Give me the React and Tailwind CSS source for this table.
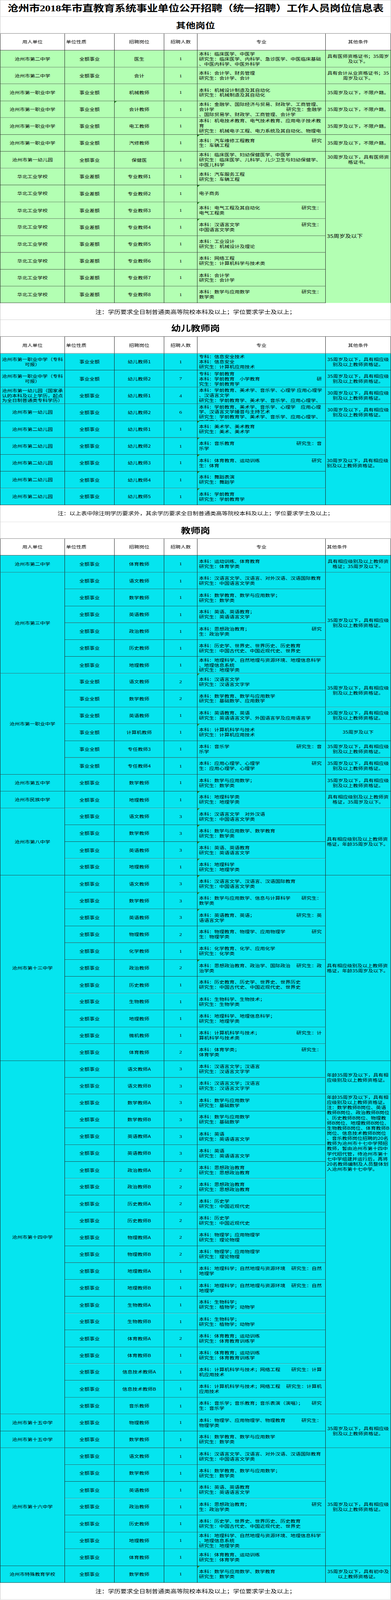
import React from 'react';

const GREEN = 'bg-[#b3ffb3]';
const CYAN = 'bg-[#05e5ef]';
const QE = '全额事业';
const SQ = '事业全额';

const A35 = ['35周岁及以下，具有相应级', '别及以上教师资格证。'];
const A30 = ['30周岁及以下，具有相应级', '别及以上教师资格证。'];
const Y35 = ['具有相应级别及以上教师资', '格证，年龄35周岁及以下。'];
const BUXIAN = ['35周岁及以下，不限户籍。'];
const LONG = [
  '年龄35周岁及以下，具有相',
  '应级别及以上教师资格证。',
  '注：数学教师B岗位、英语',
  '教师B岗位、政治教师B岗位',
  '、历史教师B岗位、物理教',
  '师B岗位、地理教师B岗位、',
  '生物教师B岗位、体育教师B',
  '岗位、信息技术教师B岗位',
  '、音乐教师岗位招聘的20名',
  '教师为沧州市十七中学预招',
  '教师，暂由沧州市第十四中',
  '学代招代管，待沧州市第十',
  '七中学组建并运行后，再将',
  '20名教师编制及人员整体划',
  '入沧州市第十七中学。',
];

const other = [
  { u: '沧州市第二中学', n: QE, p: '医生', c: '1', m: ['本科：临床医学、中医学', '研究生：临床医学、内科学、急诊医学、中医临床基础', '、中医内科学、中医外科学'], o: ['具有医师资格证书；35周岁', '及以下。'] },
  { u: '沧州市第二中学', n: QE, p: '会计', c: '1', m: ['本科：会计学、财务管理', '研究生：会计学、会计'], o: ['具有会计从业资格证书；35', '周岁及以下。'] },
  { u: '沧州市第一职业中学', n: SQ, p: '机械教师', c: '1', m: ['本科：机械设计制造及其自动化', '研究生：机械制造及其自动化'], o: BUXIAN },
  { u: '沧州市第一职业中学', n: SQ, p: '会计教师', c: '1', pk: true, m: ['本科：金融学、国际经济与贸易、财政学、工商管理、', ['会计学', '研究生：金融学'], '、国际贸易学、财政学、工商管理、会计学'], o: BUXIAN },
  { u: '沧州市第一职业中学', n: SQ, p: '电工教师', c: '1', m: ['本科：机电技术教育、电气技术教育、应用电子技术教', '育', '研究生：机械电子工程、电力系统及其自动化、物理电', '子学'], o: BUXIAN },
  { u: '沧州市第一职业中学', n: SQ, p: '汽修教师', c: '1', mk: true, m: [['本科：汽车维修工程教育', '研究'], '生：车辆工程'], o: BUXIAN },
  { u: '沧州市第一幼儿园', n: QE, p: '保健医', c: '1', m: ['本科：临床医学、妇幼保健医学、中医学', '研究生：临床医学、儿科学、儿少卫生与妇幼保健学、', '中医儿科学'], o: ['30周岁及以下，具有医师资', '格证书。'] },
  { u: '华北工业学校', n: '事业差额', p: '专业教师1', c: '1', m: ['本科：汽车服务工程', '研究生：车辆工程'], o: ['35周岁及以下'], os: 8, oa: 'l', big: true, nb: true },
  { u: '华北工业学校', n: '事业差额', p: '专业教师2', c: '1', mk: true, m: ['电子商务'], o: null },
  { u: '华北工业学校', n: '事业差额', p: '专业教师3', c: '1', mk: true, m: [['本科：电气工程及其自动化', '研究生：'], '电气工程类'], o: null },
  { u: '华北工业学校', n: '事业差额', p: '专业教师4', c: '1', mk: true, m: [['本科：汉语言文学', '研究生：'], '中国语言文学类'], o: null },
  { u: '华北工业学校', n: '事业差额', p: '专业教师5', c: '1', m: ['本科：工业设计', '研究生：机械设计及理论'], o: null },
  { u: '华北工业学校', n: '事业差额', p: '专业教师6', c: '1', m: ['本科：网络工程', '研究生：计算机科学与技术类'], o: null },
  { u: '华北工业学校', n: '事业差额', p: '专业教师7', c: '1', m: ['本科：会计学', '研究生：会计学'], o: null },
  { u: '华北工业学校', n: '事业差额', p: '专业教师8', c: '1', m: [['本科：数学与应用数学', '研究生：'], '数学类'], o: null },
];

const kids = [
  { u: ['沧州市第一职业中学（专科', '可报）'], n: SQ, p: '幼儿教师1', c: '1', m: ['专科：信息安全技术', '本科：信息安全', '研究生：计算机应用技术'], o: A35 },
  { u: ['沧州市第一职业中学（专科', '可报）'], n: SQ, p: '幼儿教师2', c: '7', m: ['专科：学前教育', ['本科：学前教育　小学教育', '研'], '究生：学前教育学'], o: A35 },
  { u: ['沧州市第一幼儿园（国家承', '认的本科及以上学历，起点', '为全日制普通类专科学历）'], n: QE, p: '幼儿教师1', c: '4', m: ['本科：学前教育、美术学、音乐学、心理学 应用心理学', '、汉语言文学', '研究生：学前教育学、美术学、音乐学、应用心理学、', '汉语言文学'], o: A30 },
  { u: '沧州市第一幼儿园', n: QE, p: '幼儿教师2', c: '6', m: ['本科：学前教育、美术学、音乐学、心理学　应用心理', '学、汉语言文学播音与主持艺术', '研究生：学前教育学、美术学、音乐学、应用心理学、', '汉语言文学'], o: A30 },
  { u: '沧州市第二幼儿园', n: QE, p: '幼儿教师1', c: '1', mk: true, m: ['本科：美术学、美术教育', '研究生：美术、美术学'], o: A30, os: 5, oa: 'l' },
  { u: '沧州市第二幼儿园', n: QE, p: '幼儿教师2', c: '1', mk: true, m: [['本科：音乐教育', '研究生：音'], '乐学'], o: null },
  { u: '沧州市第二幼儿园', n: QE, p: '幼儿教师3', c: '1', mk: true, m: [['本科：体育教育、运动训练', '研究'], '生：体育'], o: null },
  { u: '沧州市第二幼儿园', n: QE, p: '幼儿教师4', c: '1', mk: true, m: ['本科：舞蹈表演', '研究生：舞蹈学'], o: null },
  { u: '沧州市第二幼儿园', n: QE, p: '幼儿教师5', c: '1', mk: true, m: ['本科：学前教育', '研究生：学前教育学'], o: null },
];

const teach = [
  { u: '沧州市第二中学', n: QE, p: '体育教师', c: '1', m: ['本科：运动训练、体育教育', '研究生：体育学类'], o: ['具有相应级别及以上教师资', '格证；35周岁及以下。'] },
  { u: '沧州市第三中学', us: 6, n: QE, p: '语文教师', c: '1', m: ['本科：汉语言文学、汉语言、对外汉语、汉语国际教育', '研究生：中国语言文学类'], o: A35, os: 6 },
  { u: null, n: QE, p: '数学教师', c: '1', m: ['本科：数学教育、数学与应用数学；', '研究生：数学类'], o: null },
  { u: null, n: QE, p: '英语教师', c: '1', m: ['本科：英语、英语教育；', '研究生：英语语言文学'], o: null },
  { u: null, n: QE, p: '政治教师', c: '1', m: [['本科：思想政治教育；', '研究'], '生：政治学类'], o: null },
  { u: null, n: QE, p: '历史教师', c: '1', m: ['本科：历史学、世界史、世界历史、历史教育', '研究生：中国古代史、中国近现代史、世界史'], o: null },
  { u: null, n: QE, p: '地理教师', c: '1', m: ['本科：地理科学、自然地理与资源环境、地理信息科学', '、地理信息系统', '研究生：地理学类'], o: null },
  { u: '沧州市第一职业中学', us: 6, n: SQ, p: '语文教师', c: '2', mk: true, m: ['本科：汉语言文学', '研究生：汉语言文字学'], o: A35, os: 2 },
  { u: null, n: SQ, p: '数学教师', c: '2', m: ['本科：数学教育、数学与应用数学', '研究生：基础数学、应用数学'], o: null },
  { u: null, n: SQ, p: '英语教师', c: '1', m: ['本科：英语教育、英语', '研究生：英语语言文学、外国语言学及应用语言学'], o: A35 },
  { u: null, n: SQ, p: '计算机教师', c: '1', mk: true, m: ['本科：计算机科学与技术', '研究生：计算机应用技术'], o: ['35周岁及以下'] },
  { u: null, n: SQ, p: '专任教师3', c: '1', m: [['本科：音乐学', '研究生：音'], '乐学'], o: A35 },
  { u: null, n: SQ, p: '专任教师4', c: '1', m: [['本科：应用心理学、心理学', '研究'], '生：应用心理学、心理学'], o: A35 },
  { u: '沧州市第五中学', n: QE, p: '数学教师', c: '1', m: ['本科：数学与应用数学；', '研究生：数学类'], o: A35 },
  { u: '沧州市民族中学', n: QE, p: '地理教师', c: '1', mk: true, m: ['本科：地理科学类', '研究生：地理学类'], o: ['具有相应级别及以上教师资', '格证，35周岁及以下。'] },
  { u: '沧州市第八中学', us: 4, n: QE, p: '语文教师', c: '3', mk: true, m: ['本科：汉语言文学　对外汉语', '研究生：中国语言文学类'], o: Y35, os: 4, oa: 'l' },
  { u: null, n: QE, p: '数学教师', c: '3', mk: true, m: ['本科：数学与应用数学、数学教育', '研究生：数学类'], o: null },
  { u: null, n: QE, p: '英语教师', c: '3', mk: true, m: ['本科：英语、英语教育', '研究生：英语语言文学'], o: null },
  { u: null, n: QE, p: '地理教师', c: '1', mk: true, m: ['本科：地理科学', '研究生：地理学类'], o: null },
  { u: '沧州市第十三中学', us: 11, n: QE, p: '语文教师', c: '3', mk: true, m: ['本科：汉语言文学、汉语言、汉语国际教育', '研究生：中国语言文学类'], o: Y35, os: 11, oa: 'l' },
  { u: null, n: QE, p: '数学教师', c: '3', mk: true, m: [['本科：数学与应用数学、信息与计算科学', '研究生：'], '数学类'], o: null },
  { u: null, n: QE, p: '英语教师', c: '3', mk: true, m: [['本科：英语教育、英语；', '研究生：英'], '语语言文学'], o: null },
  { u: null, n: QE, p: '物理教师', c: '2', m: [['本科：物理教育、物理学、应用物理学', '研究'], '生：物理学类'], o: null },
  { u: null, n: QE, p: '化学教师', c: '1', m: ['本科：化学教育、化学、应用化学', '研究生：化学类'], o: null },
  { u: null, n: QE, p: '政治教师', c: '2', mk: true, m: [['本科：思想政治教育、政治学、国际政治', '研究生：政'], '治学类'], o: null },
  { u: null, n: QE, p: '历史教师', c: '1', m: ['本科：历史教育、历史学、世界史、世界历史', '研究生：中国古代史、中国近现代史、世界史'], o: null },
  { u: null, n: QE, p: '生物教师', c: '1', m: ['本科：生物科学、生物技术；', '研究生：生物学类'], o: null },
  { u: null, n: QE, p: '地理教师', c: '1', m: ['本科：地理科学、地理信息科学；', '研究生：地理学类'], o: null },
  { u: null, n: QE, p: '微机教师', c: '1', m: [['本科：计算机科学与技术；', '研究生：计'], '算机科学与技术类'], o: null },
  { u: null, n: QE, p: '体育教师', c: '2', m: [['本科：体育学类；', '研究生：'], '体育学类'], o: null },
  { u: '沧州市第十四中学', us: 21, n: QE, p: '语文教师A', c: '3', m: ['本科：汉语言文学；汉语言', '研究生：汉语言文字学'], o: ['年龄35周岁及以下，具有相', '应级别及以上教师资格证。'], os: 2, oa: 'l' },
  { u: null, n: QE, p: '语文教师B', c: '3', m: ['本科：汉语言文学；汉语言', '研究生：汉语言文字学'], o: null },
  { u: null, n: QE, p: '数学教师A', c: '3', m: ['本科：数学与应用数学', '研究生：基础数学'], o: LONG, os: 19, oa: 'l', ot: true },
  { u: null, n: QE, p: '数学教师B', c: '3', m: ['本科：数学与应用数学', '研究生：基础数学'], o: null },
  { u: null, n: QE, p: '英语教师A', c: '3', m: ['本科：英语', '研究生：英语语言文学'], o: null },
  { u: null, n: QE, p: '英语教师B', c: '3', m: ['本科：英语', '研究生：英语语言文学'], o: null },
  { u: null, n: QE, p: '政治教师A', c: '2', m: ['本科：思想政治教育', '研究生：思想政治教育'], o: null },
  { u: null, n: QE, p: '政治教师B', c: '2', m: ['本科：思想政治教育', '研究生：思想政治教育'], o: null },
  { u: null, n: QE, p: '历史教师A', c: '2', m: ['本科：历史学', '研究生：中国近现代史'], o: null },
  { u: null, n: QE, p: '历史教师B', c: '2', m: ['本科：历史学', '研究生：中国近现代史'], o: null },
  { u: null, n: QE, p: '物理教师A', c: '2', m: ['本科：物理学；应用物理学', '研究生：理论物理'], o: null },
  { u: null, n: QE, p: '物理教师B', c: '2', m: ['本科：物理学；应用物理学', '研究生：理论物理'], o: null },
  { u: null, n: QE, p: '地理教师A', c: '1', m: [['本科：地理科学；自然地理与资源环境', '研究生：自然'], '地理学'], o: null },
  { u: null, n: QE, p: '地理教师B', c: '1', m: [['本科：地理科学；自然地理与资源环境', '研究生：自然'], '地理学'], o: null },
  { u: null, n: QE, p: '生物教师A', c: '1', m: ['本科：生物科学；', '研究生：植物学；动物学'], o: null },
  { u: null, n: QE, p: '生物教师B', c: '1', m: ['本科：生物科学；', '研究生：植物学；动物学'], o: null },
  { u: null, n: QE, p: '体育教师A', c: '2', m: ['本科：体育教育；运动训练', '研究生：体育教育训练学'], o: null },
  { u: null, n: QE, p: '体育教师B', c: '1', m: ['本科：体育教育；运动训练', '研究生：体育教育训练学'], o: null },
  { u: null, n: QE, p: '信息技术教师A', c: '1', m: [['本科：计算机科学与技术；网络工程', '研究生：计算'], '机应用技术'], o: null },
  { u: null, n: QE, p: '信息技术教师B', c: '1', m: [['本科：计算机科学与技术；网络工程', '研究生：计算机'], '应用技术'], o: null },
  { u: null, n: QE, p: '音乐教师', c: '1', m: [['本科：音乐学；音乐教育；音乐表演（演唱）；', '研究'], '生：音乐学'], o: null },
  { u: '沧州市第十五中学', n: QE, p: '物理教师', c: '1', m: [['本科：物理学、应用物理学、物理教育', '研究生：'], '物理学类'], o: A35, os: 2 },
  { u: '沧州市第十五中学', n: QE, p: '数学教师', c: '1', m: ['本科：数学教育、数学与应用数学', '研究生：数学类'], o: null },
  { u: '沧州市第十六中学', us: 7, n: QE, p: '语文教师', c: '1', m: ['本科：汉语言文学、汉语言、对外汉语、汉语国际教育', '研究生：中国语言文学类'], o: A35, os: 7 },
  { u: null, n: QE, p: '数学教师', c: '1', m: ['本科：数学教育、数学与应用数学；', '研究生：数学类'], o: null },
  { u: null, n: QE, p: '英语教师', c: '1', m: ['本科：英语、英语教育', '研究生：英语语言文学'], o: null },
  { u: null, n: QE, p: '政治教师', c: '1', m: [['本科：思想政治教育；', '研究'], '生：政治学类'], o: null },
  { u: null, n: QE, p: '历史教师', c: '1', m: ['本科：历史学、世界史、世界历史、历史教育', '研究生：中国古代史、中国近现代史、世界史'], o: null },
  { u: null, n: QE, p: '地理教师', c: '1', m: ['本科：地理科学、自然地理与资源环境、地理信息科学', '、地理信息系统', '研究生：地理学类'], o: null },
  { u: null, n: QE, p: '体育教师', c: '1', m: ['本科：体育教育、运动训练', '研究生：体育学类'], o: null },
  { u: '沧州市特殊教育学校', n: QE, p: '数学教师', c: '1', mk: true, m: ['本科：数学与应用数学、数学教育', '研究生：数学类'], o: ['35周岁及以下，具有初中及', '以上教师资格证。'] },
];

const cellB = 'relative overflow-hidden border-r border-b border-[#1e1e1e]';

function Mark() {
  return <span className="absolute left-0 top-0 h-0 w-0 border-t-[6px] border-r-[6px] border-t-[#21861f] border-r-transparent" />;
}

function Lines({ lines }) {
  return lines.map((l, i) =>
    Array.isArray(l) ? (
      <div key={i} className="flex justify-between whitespace-nowrap pr-[5px]">
        <span>{l[0]}</span>
        <span>{l[1]}</span>
      </div>
    ) : (
      <div key={i} className="whitespace-nowrap">{l}</div>
    )
  );
}

// every cell gets an explicit grid area, worked out from the running row count
function buildCells() {
  const cells = [];
  let row = 1;
  const put = (key, r, c, rs, cs, className, children) =>
    cells.push(
      <div key={key} className={className} style={{ gridRow: `${r} / span ${rs}`, gridColumn: `${c} / span ${cs}` }}>
        {children}
      </div>
    );

  const banner = (key, text, kind) => {
    const base = 'flex items-center justify-center overflow-hidden whitespace-nowrap bg-white border-x border-b';
    let cls;
    if (kind === 'title') cls = `${base} border-t border-[#c4c4c4] font-['Liberation_Serif','Noto_Sans_CJK_SC',serif] text-[28px] font-bold tracking-[-0.5px]`;
    else if (kind === 'section') cls = `${base} border-x-[#c4c4c4] border-b-[#2a2a2a] text-[25px] font-bold`;
    else cls = `${base} border-[#c4c4c4] ${kind === 'note2' ? 'text-[15px]' : 'text-[16px]'}`;
    put(key, row, 1, 1, 6, cls, text);
    row += 1;
  };

  const header = (key, leftCond) => {
    const h = `${cellB} flex items-center bg-white`;
    put(`${key}1`, row, 1, 1, 1, `${h} justify-center border-l`, '用人单位');
    put(`${key}2`, row, 2, 1, 1, `${h} justify-start pl-[3px]`, '单位性质');
    put(`${key}3`, row, 3, 1, 1, `${h} justify-center`, '招聘岗位');
    put(`${key}4`, row, 4, 1, 1, `${h} justify-center`, '招聘人数');
    put(`${key}5`, row, 5, 1, 1, `${h} justify-center`, '专业');
    put(`${key}6`, row, 6, 1, 1, `${h} ${leftCond ? 'justify-start pl-[3px]' : 'justify-center'}`, '其他条件');
    row += 1;
  };

  const data = (key, rows, bg) => {
    rows.forEach((r, i) => {
      const k = `${key}${i}`;
      if (r.u !== null) {
        const lines = Array.isArray(r.u) ? r.u : [r.u];
        put(`${k}u`, row, 1, r.us || 1, 1,
          `${cellB} ${bg} border-l flex flex-col items-center justify-center px-[2px] text-center leading-[16px]`,
          <Lines lines={lines} />);
      }
      put(`${k}n`, row, 2, 1, 1, `${cellB} ${bg} flex items-center justify-center`, r.n);
      put(`${k}p`, row, 3, 1, 1, `${cellB} ${bg} flex items-center justify-center`, <>{r.pk && <Mark />}{r.p}</>);
      put(`${k}c`, row, 4, 1, 1, `${cellB} ${bg} flex items-center justify-center font-['Liberation_Serif',serif] text-[14px]`, r.c);
      put(`${k}m`, row, 5, 1, 1,
        `${cellB} ${bg} flex flex-col px-[4px] leading-[16px] ${r.m.length > 3 ? 'justify-start pt-[1px]' : 'justify-center'}`,
        <>{r.mk && <Mark />}<Lines lines={r.m} /></>);
      if (r.o !== null) {
        put(`${k}o`, row, 6, r.os || 1, 1,
          `relative overflow-hidden border-r border-[#1e1e1e] ${r.nb ? '' : 'border-b'} ${bg} flex flex-col px-[3px] ${
            r.ot ? 'justify-start pt-[1px] leading-[16.3px]' : 'justify-center leading-[16px]'
          } ${r.oa === 'l' ? 'items-start text-left' : 'items-center text-center'} ${r.big ? 'text-[15px]' : ''}`,
          <Lines lines={r.o} />);
      }
      row += 1;
    });
  };

  banner('t', '沧州市2018年市直教育系统事业单位公开招聘（统一招聘）工作人员岗位信息表', 'title');
  banner('s1', '其他岗位', 'section');
  header('h1');
  data('a', other, GREEN);
  banner('n1', '注：学历要求全日制普通类高等院校本科及以上；学位要求学士及以上；', 'note');
  banner('s2', '幼儿教师岗', 'section');
  header('h2');
  data('b', kids, CYAN);
  banner('n2', '注：以上表中除注明学历要求外，其余学历要求全日制普通类高等院校本科及以上；学位要求学士及以上；', 'note2');
  banner('s3', '教师岗', 'section');
  header('h3', true);
  data('c', teach, CYAN);
  banner('n3', '注：学历要求全日制普通类高等院校本科及以上；学位要求学士及以上；', 'note');
  return cells;
}

export default function App() {
  return (
    <div className="h-[4096px] w-[1000px] overflow-hidden bg-white text-black">
      <div className="origin-top-left scale-y-[0.80614]">
        <div className="grid grid-cols-[166px_127px_127px_85px_328px_167px] grid-rows-[repeat(95,53.48px)] font-['Noto_Sans_CJK_SC',sans-serif] text-[13px]">
          {buildCells()}
        </div>
      </div>
    </div>
  );
}
